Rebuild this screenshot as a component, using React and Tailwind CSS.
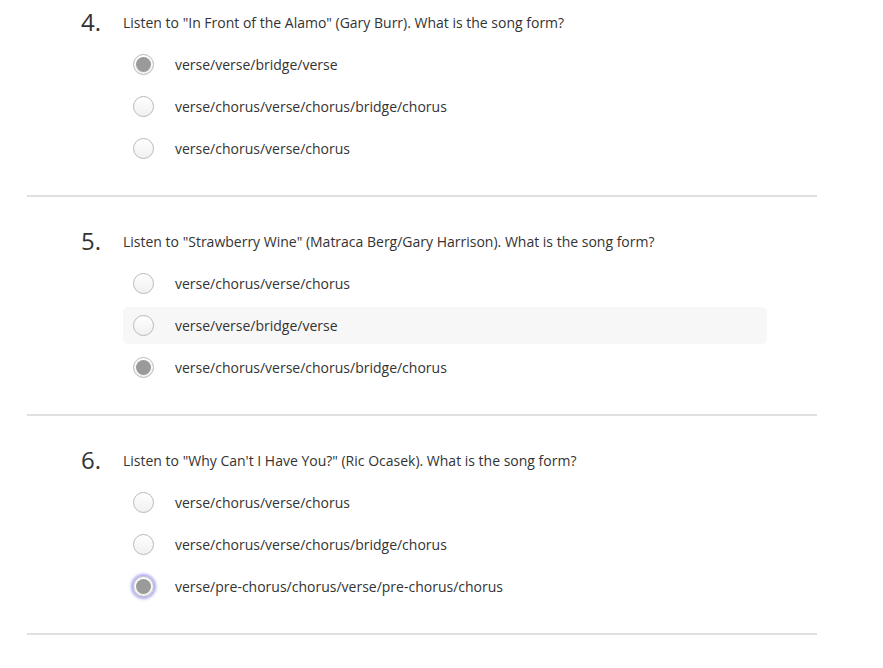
import React from "react";

const questions = [
  {
    n: "4.",
    q: 'Listen to "In Front of the Alamo" (Gary Burr). What is the song form?',
    opts: ["verse/verse/bridge/verse", "verse/chorus/verse/chorus/bridge/chorus", "verse/chorus/verse/chorus"],
    sel: 0,
  },
  {
    n: "5.",
    q: 'Listen to "Strawberry Wine" (Matraca Berg/Gary Harrison). What is the song form?',
    opts: ["verse/chorus/verse/chorus", "verse/verse/bridge/verse", "verse/chorus/verse/chorus/bridge/chorus"],
    sel: 2,
    hover: 1,
  },
  {
    n: "6.",
    q: 'Listen to "Why Can\'t I Have You?" (Ric Ocasek). What is the song form?',
    opts: ["verse/chorus/verse/chorus", "verse/chorus/verse/chorus/bridge/chorus", "verse/pre-chorus/chorus/verse/pre-chorus/chorus"],
    sel: 2,
    focus: true,
  },
];

function Radio({ checked, focus }) {
  return (
    <div
      className={
        "w-[21px] h-[21px] rounded-full border border-[#b9b9b9] bg-gradient-to-b from-white to-[#f0f0f0] flex items-center justify-center shrink-0 " +
        (focus ? "shadow-[0_0_3px_2px_#a8a8f0]" : "")
      }
    >
      {checked && <div className="w-[15px] h-[15px] rounded-full bg-[#9a9a9a]" />}
    </div>
  );
}

export default function App() {
  return (
    <div className="w-[883px] h-[668px] bg-white overflow-hidden text-[#333]" style={{ fontFamily: '"Open Sans", sans-serif' }}>
      <div className="ml-[27px] w-[790px]">
        {questions.map((qq, i) => (
          <div key={i} className={(i === 0 ? "pt-[7px]" : "pt-[29px]") + " pb-[28px] border-b-2 border-[#e0e0e0]"}>
            <div className="h-[30px] flex items-center pl-[54px]">
              <div className="w-[42px] text-[24px] leading-none">{qq.n}</div>
              <div className="text-[14px] mt-[1px]">{qq.q}</div>
            </div>
            <div className="mt-[9px] ml-[96px] w-[644px] flex flex-col gap-[5px]">
              {qq.opts.map((o, j) => (
                <div
                  key={j}
                  className={"h-[37px] flex items-center pl-[10px] rounded-[5px] " + (qq.hover === j ? "bg-[#f7f7f7]" : "")}
                >
                  <Radio checked={qq.sel === j} focus={qq.focus && qq.sel === j} />
                  <span className="ml-[21px] text-[14px]">{o}</span>
                </div>
              ))}
            </div>
          </div>
        ))}
      </div>
    </div>
  );
}
